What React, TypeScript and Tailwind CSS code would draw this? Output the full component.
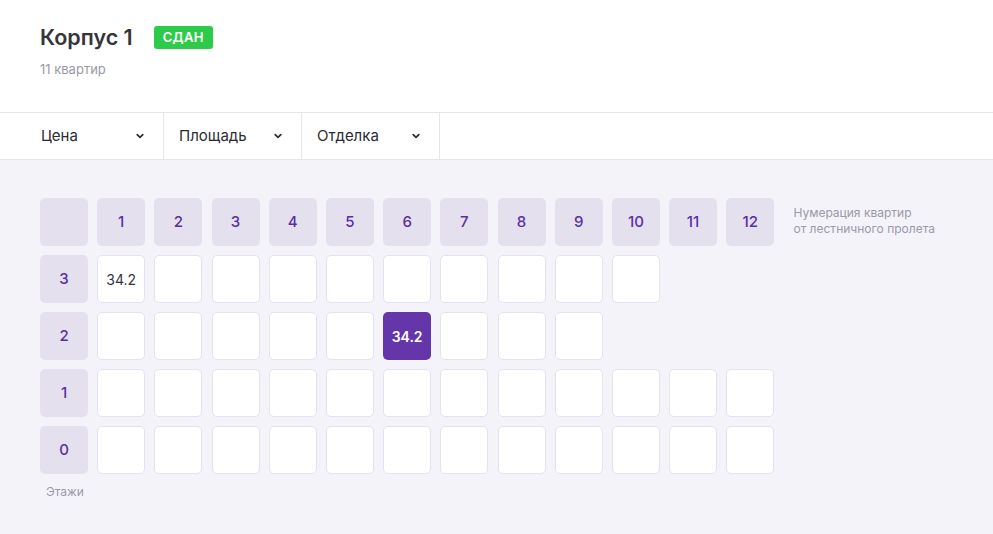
import React from "react";

const floors = [
  { n: 3, count: 10, cells: { 1: { label: "34.2", active: false } } as Record<number, { label: string; active: boolean }> },
  { n: 2, count: 9, cells: { 6: { label: "34.2", active: true } } as Record<number, { label: string; active: boolean }> },
  { n: 1, count: 12, cells: {} as Record<number, { label: string; active: boolean }> },
  { n: 0, count: 12, cells: {} as Record<number, { label: string; active: boolean }> },
];

const Chevron = () => (
  <svg width="12" height="12" viewBox="0 0 12 12" fill="none">
    <path d="M3.2 4.6L6 7.4L8.8 4.6" stroke="#2b2b33" strokeWidth="1.7" strokeLinecap="round" strokeLinejoin="round" />
  </svg>
);

const filters = [
  { label: "Цена", w: "w-[164px]" },
  { label: "Площадь", w: "w-[138px]" },
  { label: "Отделка", w: "w-[138px]" },
];

export default function App() {
  const cols = Array.from({ length: 12 }, (_, i) => i + 1);
  return (
    <div className="w-[993px] h-[534px] bg-white font-['Inter',sans-serif] overflow-hidden">
      <div className="h-[113px] px-10 pt-[23px] border-b border-[#e7e4ee]">
        <div className="flex items-center gap-[21px]">
          <h1 className="text-[21.5px] leading-[28px] font-semibold text-[#35343d]">Корпус 1</h1>
          <span className="h-[23px] px-[9px] rounded-[3px] bg-[#2ecb4a] text-white text-[13px] font-semibold leading-[23px] tracking-[0.3px]">
            СДАН
          </span>
        </div>
        <div className="mt-[9px] text-[13px] leading-[18px] text-[#9b99a6]">11 квартир</div>
      </div>

      <div className="flex h-[47px] border-b border-[#e7e4ee]">
        {filters.map((f, i) => (
          <div
            key={f.label}
            className={`${f.w} flex items-center justify-between border-r border-[#e7e4ee] ${i === 0 ? "pl-[41px]" : "pl-[15px]"} pr-[17px]`}
          >
            <span className="text-[15px] text-[#2b2b33]">{f.label}</span>
            <Chevron />
          </div>
        ))}
      </div>

      <div className="bg-[#f5f3fa] h-[374px] pt-[38px] pl-10">
        <div className="flex gap-[9.2px]">
          <div className="w-[48px] h-[48px] rounded-[5px] bg-[#e5e0ee]" />
          {cols.map((c) => (
            <div
              key={c}
              className="w-[48px] h-[48px] rounded-[5px] bg-[#e5e0ee] flex items-center justify-center text-[15px] font-medium text-[#5a2ea5]"
            >
              {c}
            </div>
          ))}
          <div className="ml-[10px] mt-[7px] text-[12px] leading-[16px] text-[#9b99a8]">
            <div>Нумерация квартир</div>
            <div>от лестничного пролета</div>
          </div>
        </div>
        {floors.map((f) => (
          <div key={f.n} className="flex gap-[9.2px] mt-[9px]">
            <div className="w-[48px] h-[48px] rounded-[5px] bg-[#e5e0ee] flex items-center justify-center text-[15px] font-medium text-[#5a2ea5]">
              {f.n}
            </div>
            {cols.slice(0, f.count).map((c) => {
              const cell = f.cells[c];
              if (cell?.active) {
                return (
                  <div
                    key={c}
                    className="w-[48px] h-[48px] rounded-[5px] bg-[#6436a9] flex items-center justify-center text-[14px] font-semibold text-white"
                  >
                    {cell.label}
                  </div>
                );
              }
              return (
                <div
                  key={c}
                  className="w-[48px] h-[48px] rounded-[5px] bg-white border border-[#e6e1f0] flex items-center justify-center text-[14px] text-[#35343d]"
                >
                  {cell?.label}
                </div>
              );
            })}
          </div>
        ))}
        <div className="mt-[10px] pl-[6px] text-[12px] leading-[16px] text-[#9b99a8]">Этажи</div>
      </div>
    </div>
  );
}
